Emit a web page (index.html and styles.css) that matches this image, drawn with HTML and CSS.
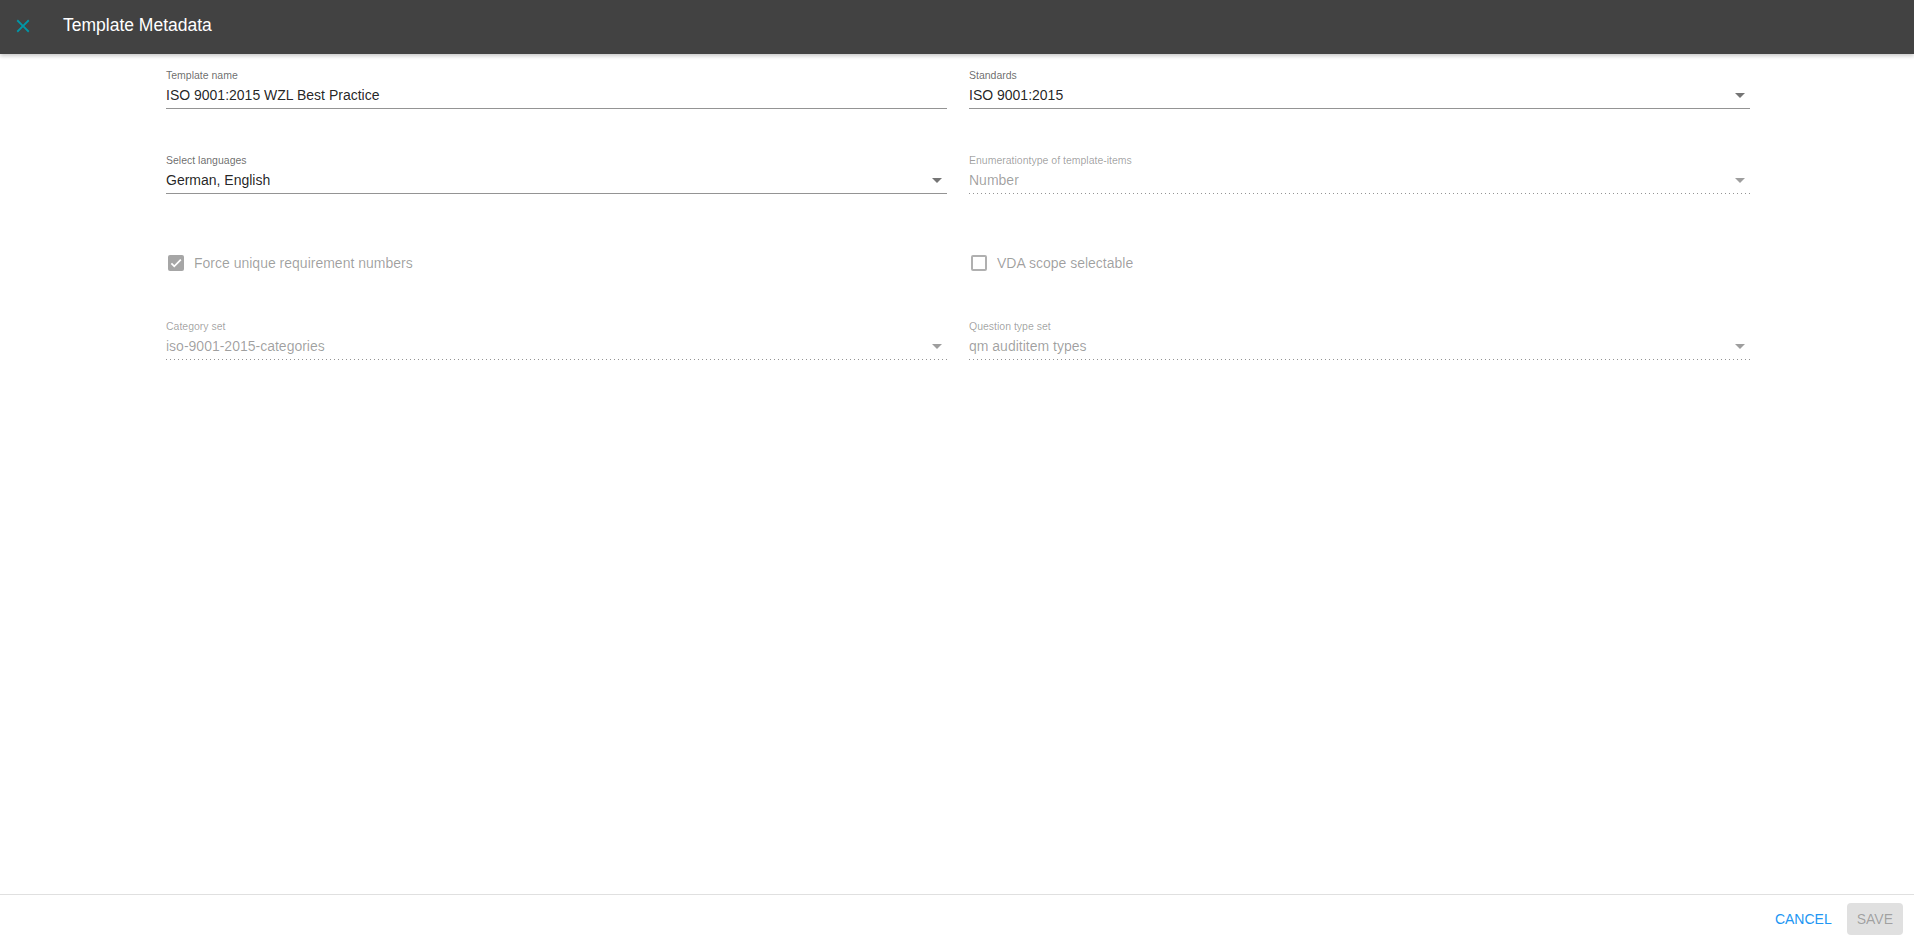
FILE: index.html
```html
<!DOCTYPE html>
<html lang="en">
<head>
  <meta charset="UTF-8">
  <meta name="viewport" content="width=device-width, initial-scale=1.0">
  <title>Template Metadata</title>
  <link rel="stylesheet" href="styles.css">
</head>
<body>
  <div class="dialog">
    <div class="toolbar">
      <div class="close-button">
        <svg viewBox="0 0 24 24" width="22" height="22">
          <path d="M19 6.41L17.59 5 12 10.59 6.41 5 5 6.41 10.59 12 5 17.59 6.41 19 12 13.41 17.59 19 19 17.59 13.41 12z" fill="#0097a7"/>
        </svg>
      </div>
      <div class="toolbar-title">Template Metadata</div>
    </div>

    <div class="content">
      <div class="form">
        <!-- Row 1 -->
        <div class="field">
          <div class="field-label">Template name</div>
          <div class="field-value">ISO 9001:2015 WZL Best Practice</div>
        </div>
        <div class="field">
          <div class="field-label">Standards</div>
          <div class="field-value">
            <span class="value-text">ISO 9001:2015</span>
            <span class="arrow"></span>
          </div>
        </div>

        <!-- Row 2 -->
        <div class="field">
          <div class="field-label">Select languages</div>
          <div class="field-value">
            <span class="value-text">German, English</span>
            <span class="arrow"></span>
          </div>
        </div>
        <div class="field disabled">
          <div class="field-label">Enumerationtype of template-items</div>
          <div class="field-value">
            <span class="value-text">Number</span>
            <span class="arrow"></span>
          </div>
        </div>

        <!-- Checkboxes -->
        <div class="check-row">
          <span class="checkbox checked">
            <svg viewBox="0 0 24 24" width="14" height="14">
              <path d="M4.1 12.7L9 17.6 20.3 6.3" fill="none" stroke="#fff" stroke-width="3"/>
            </svg>
          </span>
          <span class="check-label">Force unique requirement numbers</span>
        </div>
        <div class="check-row">
          <span class="checkbox"></span>
          <span class="check-label">VDA scope selectable</span>
        </div>

        <!-- Row 4 -->
        <div class="field disabled">
          <div class="field-label">Category set</div>
          <div class="field-value">
            <span class="value-text">iso-9001-2015-categories</span>
            <span class="arrow"></span>
          </div>
        </div>
        <div class="field disabled">
          <div class="field-label">Question type set</div>
          <div class="field-value">
            <span class="value-text">qm audititem types</span>
            <span class="arrow"></span>
          </div>
        </div>
      </div>
    </div>

    <div class="actions">
      <div class="btn btn-flat">CANCEL</div>
      <div class="btn btn-disabled">SAVE</div>
    </div>
  </div>
</body>
</html>
```

FILE: styles.css
```css
html, body {
  margin: 0;
  height: 100%;
}

body {
  font-family: "Liberation Sans", Arial, sans-serif;
  font-size: 14px;
  color: rgba(0, 0, 0, 0.87);
  background: #fff;
}

.dialog {
  display: flex;
  flex-direction: column;
  height: 100vh;
}

.toolbar {
  height: 54px;
  box-sizing: border-box;
  padding: 0 0 3px 12px;
  display: flex;
  align-items: center;
  background: #424242;
  color: #fff;
  box-shadow: 0 2px 4px rgba(0, 0, 0, 0.22);
  position: relative;
  z-index: 1;
}

.close-button {
  width: 22px;
  height: 22px;
  display: flex;
}

.toolbar-title {
  margin-left: 29px;
  font-size: 17.5px;
}

.content {
  flex: 1;
}

.form {
  display: grid;
  grid-template-columns: 1fr 1fr;
  column-gap: 22px;
  padding: 14px 164px 0 166px;
}

.field {
  height: 41px;
  margin-bottom: 44px;
}

.field-label {
  font-size: 10.5px;
  line-height: 14px;
  color: rgba(0, 0, 0, 0.6);
  margin-bottom: 4px;
}

.field-value {
  display: flex;
  align-items: center;
  height: 18px;
  line-height: 18px;
  padding-bottom: 4px;
  border-bottom: 1px solid rgba(0, 0, 0, 0.42);
}

.value-text {
  flex: 1;
}

.arrow {
  width: 0;
  height: 0;
  margin: 0 5px 0 4px;
  border-left: 5px solid transparent;
  border-right: 5px solid transparent;
  border-top: 5px solid rgba(0, 0, 0, 0.54);
}

.disabled .field-label,
.disabled .field-value {
  color: rgba(0, 0, 0, 0.38);
}

.disabled .field-value {
  border-bottom: none;
  padding-bottom: 5px;
  background: linear-gradient(to right, rgba(0, 0, 0, 0.42) 0%, rgba(0, 0, 0, 0.42) 33%, transparent 0%) left bottom / 4px 1px repeat-x;
}

.disabled .arrow {
  border-top-color: rgba(0, 0, 0, 0.38);
}

.check-row {
  height: 50px;
  margin-bottom: 31px;
  display: flex;
  align-items: center;
  padding-left: 2px;
}

.checkbox {
  width: 16px;
  height: 16px;
  box-sizing: border-box;
  border: 2px solid #b0b0b0;
  border-radius: 2px;
  display: flex;
  align-items: center;
  justify-content: center;
}

.checkbox.checked {
  border: none;
  background: #a6a6a6;
}

.check-label {
  margin-left: 10px;
  color: rgba(0, 0, 0, 0.38);
}

.actions {
  border-top: 1px solid #e0e0e0;
  height: 45px;
  box-sizing: border-box;
  padding: 8px 11px 4px;
  display: flex;
  justify-content: flex-end;
  align-items: flex-start;
  gap: 5px;
}

.btn {
  height: 32px;
  line-height: 32px;
  padding: 0 10px;
  border-radius: 4px;
  font-size: 14px;
  user-select: none;
}

.btn-flat {
  color: #2196f3;
  cursor: pointer;
}

.btn-disabled {
  background: #e0e0e0;
  color: rgba(0, 0, 0, 0.3);
}
```
